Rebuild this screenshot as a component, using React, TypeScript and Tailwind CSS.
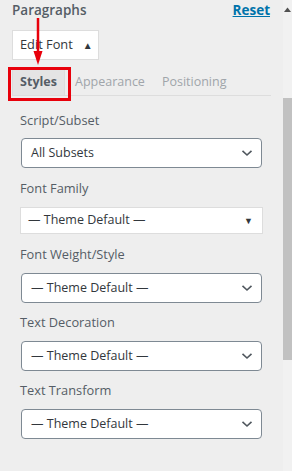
import React from "react";

const Chevron = () => (
  <svg width="12" height="8" viewBox="0 0 12 8" className="shrink-0">
    <path d="M1.5 1.8 L6 6 L10.5 1.8" fill="none" stroke="#50575e" strokeWidth="1.6" />
  </svg>
);

const Select = ({ text }: { text: string }) => (
  <div className="mx-[21px] flex h-[30px] items-center justify-between rounded-[4px] border border-[#7e8993] bg-white pl-[9px] pr-[8px] text-[12.5px] text-[#32373c]">
    <span className="whitespace-nowrap">{text}</span>
    <Chevron />
  </div>
);

const Label = ({ text }: { text: string }) => (
  <div className="ml-[20px] h-[20px] whitespace-nowrap text-[12.8px] leading-[20px] text-[#555d66]">{text}</div>
);

export default function App() {
  return (
    <div
      className="relative flex h-[471px] w-[292px] overflow-hidden bg-[#eeeeee]"
      style={{ fontFamily: '"Open Sans", "Noto Sans", sans-serif' }}
    >
      <div className="w-[283px]">
        <div className="flex h-[20px] items-center justify-between pl-[12px] pr-[13px]">
          <span className="whitespace-nowrap text-[13.5px] font-semibold leading-[20px] text-[#555d66]">Paragraphs</span>
          <span className="whitespace-nowrap text-[13.5px] font-bold leading-[20px] text-[#0073aa] underline">Reset</span>
        </div>
        <div className="ml-[12px] mt-[10px] flex h-[30px] w-[87px] items-center border border-[#dddddd] bg-white pl-[7px] text-[12.8px] text-[#32373c]">
          <span className="whitespace-nowrap">Edit Font</span>
          <span className="ml-[10px] text-[10px]">▲</span>
        </div>
        <div className="mx-[12px] mt-[10px] flex h-[26px] items-end border-b border-[#dddddd] text-[12.5px]">
          <div className="flex h-[26px] w-[53px] items-center justify-center border border-b-0 border-[#dddddd] bg-[#e4e4e4] font-bold text-[#555d66]">
            Styles
          </div>
          <div className="ml-[10px] flex h-[26px] items-center whitespace-nowrap text-[#a0a5aa]">Appearance</div>
          <div className="ml-[17px] flex h-[26px] items-center whitespace-nowrap text-[#a0a5aa]">Positioning</div>
        </div>
        <div className="mt-[14px]">
          <Label text="Script/Subset" />
          <div className="mt-[8px]">
            <Select text="All Subsets" />
          </div>
          <div className="mt-[10px]">
            <Label text="Font Family" />
          </div>
          <div className="mx-[20px] mt-[9px] flex h-[27px] items-center justify-between border border-[#dddddd] bg-white pl-[7px] pr-[9px] text-[12.5px] text-[#32373c]">
            <span className="whitespace-nowrap">— Theme Default —</span>
            <span className="text-[9px]">▼</span>
          </div>
          <div className="mt-[10px]">
            <Label text="Font Weight/Style" />
          </div>
          <div className="mt-[9px]">
            <Select text="— Theme Default —" />
          </div>
          <div className="mt-[9px]">
            <Label text="Text Decoration" />
          </div>
          <div className="mt-[9px]">
            <Select text="— Theme Default —" />
          </div>
          <div className="mt-[9px]">
            <Label text="Text Transform" />
          </div>
          <div className="mt-[9px]">
            <Select text="— Theme Default —" />
          </div>
        </div>
      </div>
      <div className="flex w-[9px] flex-col bg-[#f1f1f1]">
        <div className="flex h-[18px] items-center justify-center">
          <svg width="7" height="5" viewBox="0 0 7 5">
            <path d="M0 5 L3.5 0.5 L7 5 Z" fill="#505050" />
          </svg>
        </div>
        <div className="mt-[80px] h-[262px] w-full bg-[#c1c1c1]" />
      </div>
      <svg className="absolute left-[30px] top-[18px]" width="16" height="50" viewBox="0 0 16 50">
        <line x1="8" y1="0" x2="8" y2="38" stroke="#e8000b" strokeWidth="2.5" />
        <path d="M3.5 33 L12.5 33 L8 47 Z" fill="#e8000b" />
      </svg>
      <div className="absolute left-[8px] top-[67px] h-[34px] w-[63px] border-[3px] border-[#e8000b]" />
    </div>
  );
}
